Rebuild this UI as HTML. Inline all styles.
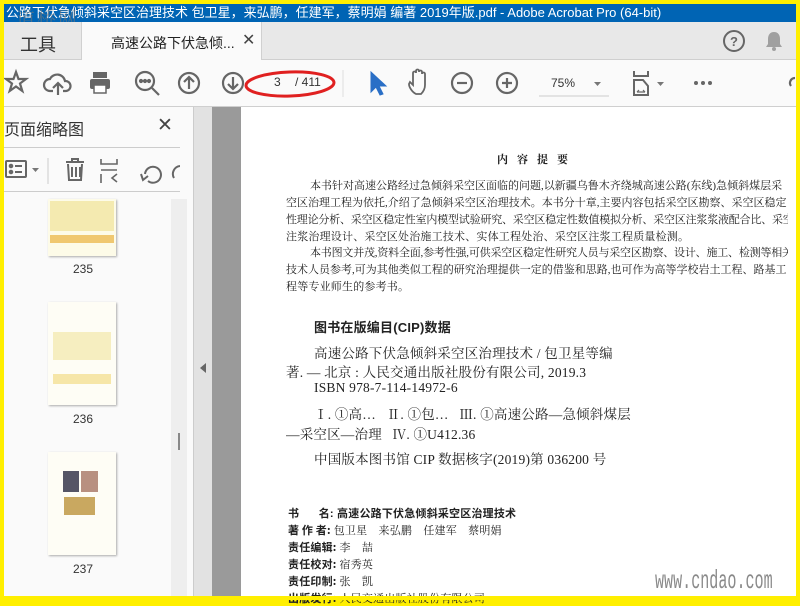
<!DOCTYPE html>
<html><head><meta charset="utf-8"><style>
*{margin:0;padding:0;box-sizing:border-box}
body{width:800px;height:600px;overflow:hidden;background:#ffef00;position:relative;font-family:"Liberation Sans","Noto Sans CJK SC",sans-serif}
.abs{position:absolute}
.serif{font-family:"Liberation Serif","Noto Serif CJK SC",serif;color:#222}
.t{position:absolute;white-space:nowrap;font-size:11px;letter-spacing:0.2px;overflow:hidden}
.w{width:502px}
</style></head><body>
<div class="abs" style="left:4px;top:4px;width:792px;height:18px;background:#0064b4;color:#fff;font-size:13px;line-height:17px;white-space:nowrap;overflow:hidden;padding-left:2px">公路下伏急倾斜采空区治理技术 包卫星，来弘鹏，任建军，蔡明娟 编著 2019年版.pdf - Adobe Acrobat Pro (64-bit)</div>
<div class="abs" style="left:16px;top:4px;font-size:19px;color:#777;opacity:.6;font-family:'Noto Serif CJK SC',serif;letter-spacing:2px">道桥网</div>
<div class="abs" style="left:4px;top:22px;width:792px;height:38px;background:#e8e8e8;border-bottom:1px solid #cfcfcf"></div>
<div class="abs" style="left:4px;top:22px;width:78px;height:37px;border-right:1px solid #d0d0d0"></div>
<div class="abs" style="left:20px;top:31px;font-size:18px;color:#333">工具</div>
<div class="abs" style="left:82px;top:22px;width:180px;height:38px;background:#fafafa;border-right:1px solid #d0d0d0"></div>
<div class="abs" style="left:111px;top:33px;font-size:14px;color:#222">高速公路下伏急倾...</div>
<div class="abs" style="left:242px;top:30px;font-size:16px;color:#444">✕</div>
<svg class="abs" style="left:722px;top:29px" width="24" height="24"><circle cx="12" cy="12" r="10" fill="none" stroke="#666" stroke-width="2"/><text x="12" y="17" font-size="13" font-weight="bold" text-anchor="middle" fill="#666" font-family="Liberation Sans">?</text></svg>
<svg class="abs" style="left:764px;top:30px" width="20" height="22"><path d="M10 2c-4 0-6 3-6 7v5l-2 3h16l-2-3V9c0-4-2-7-6-7z" fill="#a0a0a0"/><circle cx="10" cy="19" r="2" fill="#a0a0a0"/></svg>
<div class="abs" style="left:4px;top:60px;width:792px;height:47px;background:#fafafa;border-bottom:1px solid #cfcfcf"></div>
<svg class="abs" style="left:4px;top:60px" width="792" height="46" fill="none" stroke="#666" stroke-width="2.2">
<path d="M12 12l2.5 7h7.5l-6 4.5 2.3 7.5-6.3-4.5-6.3 4.5 2.3-7.5-6-4.5h7.5z"/>
<path d="M49 31h-3a6 6 0 0 1 0-12 8 8 0 0 1 15 2 5 5 0 0 1 1 10h-3M54 35V23M49 28l5-5 5 5"/>
<rect x="89" y="12" width="14" height="6" fill="#666" stroke="none"/><rect x="86" y="19" width="20" height="10" rx="2" fill="#666" stroke="none"/><rect x="90" y="25" width="12" height="8" fill="#fff" stroke="#666" stroke-width="1.5"/>
<circle cx="141" cy="21" r="9"/><path d="M148 28l7 7"/><circle cx="137" cy="21" r="1" fill="#666"/><circle cx="141" cy="21" r="1" fill="#666"/><circle cx="145" cy="21" r="1" fill="#666"/>
<circle cx="185" cy="23" r="10"/><path d="M185 29V17M180 22l5-5 5 5"/>
<circle cx="229" cy="23" r="10"/><path d="M229 17v12M224 24l5 5 5-5"/>
<path d="M339 10v27" stroke="#ddd" stroke-width="1"/>
<path d="M367 12v20l5-5 4 8 3-1-4-8h7z" fill="#2a6fc6" stroke="#2a6fc6" stroke-width="1"/>
<path d="M412 34c-4-2-7-7-7-10l1-2 3 3V13a1.5 1.5 0 0 1 3 0v-2a1.5 1.5 0 0 1 3 0v1a1.5 1.5 0 0 1 3 0v2a1.5 1.5 0 0 1 3 0v11c0 4-2 7-4 9z" stroke-width="1.8"/>
<circle cx="458" cy="23" r="10"/><path d="M453 23h10"/>
<circle cx="503" cy="23" r="10"/><path d="M498 23h10M503 18v10"/>
<path d="M535 36h70" stroke="#ccc" stroke-width="1"/>
<path d="M590 22h7l-3.5 4z" fill="#777" stroke="none"/>
<path d="M630 11v5h14v-5M630 20v15h14v-9l-5-6z" stroke-width="2"/><path d="M633 32h8M633 32l2-2M641 32l-2-2" stroke-width="1.2"/>
<path d="M653 22h7l-3.5 4z" fill="#777" stroke="none"/>
<circle cx="692" cy="23" r="2" fill="#666" stroke="none"/><circle cx="699" cy="23" r="2" fill="#666" stroke="none"/><circle cx="706" cy="23" r="2" fill="#666" stroke="none"/>
<path d="M791 18a5 5 0 0 0-4 8"/>
</svg>
<div class="abs" style="left:274px;top:75px;font-size:12px;color:#333">3</div>
<div class="abs" style="left:295px;top:75px;font-size:12px;color:#333">/ 411</div>
<div class="abs" style="left:551px;top:76px;font-size:12px;color:#333">75%</div>
<svg class="abs" style="left:242px;top:64px" width="100" height="40"><ellipse cx="48" cy="20" rx="44" ry="12" fill="none" stroke="#e02020" stroke-width="3" transform="rotate(-2 48 20)"/></svg>
<div class="abs" style="left:4px;top:107px;width:189px;height:489px;background:#fafafa"></div>
<div class="abs" style="left:4px;top:116px;font-size:16px;color:#333">页面缩略图</div>
<div class="abs" style="left:157px;top:114px;font-size:19px;color:#444">✕</div>
<div class="abs" style="left:4px;top:147px;width:176px;height:1px;background:#ccc"></div>
<svg class="abs" style="left:4px;top:152px" width="176" height="38" fill="none" stroke="#666" stroke-width="2">
<rect x="2" y="9" width="20" height="16" rx="1"/><circle cx="7" cy="14" r="1.3" fill="#666"/><circle cx="7" cy="20" r="1.3" fill="#666"/><path d="M11 14h7M11 20h7"/>
<path d="M28 16h7l-3.5 4z" fill="#777" stroke="none"/>
<path d="M44 6v26" stroke="#ccc" stroke-width="1"/>
<path d="M62 10h18M68 10V7h6v3M64 12l1 16h12l1-16M68 15v10M72 15v10M76 15v10" />
<path d="M97 7v5h16V7M97 18h16M97 22v9M113 22l-5 4 5 4" stroke-width="1.6"/>
<path d="M141 22a8 8 0 1 1 3 7M137 22l2 6 5-4" />
<path d="M176 14a8 8 0 0 0-6 12" />
</svg>
<div class="abs" style="left:4px;top:191px;width:176px;height:1px;background:#ccc"></div>
<div class="abs" style="left:171px;top:199px;width:16px;height:397px;background:#eee"></div>
<div class="abs" style="left:178px;top:433px;width:2px;height:17px;background:#888"></div>
<div class="abs" style="left:48px;top:199px;width:68px;height:57px;background:#fdfbe8;box-shadow:1px 1px 2px #aaa"><div style="margin:2px;height:30px;background:#f4eab0"></div><div style="margin:4px 2px;height:8px;background:#f0c870"></div></div>
<div class="abs" style="left:73px;top:262px;font-size:12px;color:#333">235</div>
<div class="abs" style="left:48px;top:302px;width:68px;height:103px;background:#fefdf5;box-shadow:1px 1px 2px #aaa"><div style="margin:30px 5px 0;height:28px;background:#f6eec0"></div><div style="margin:14px 5px;height:10px;background:#f6e6a8"></div></div>
<div class="abs" style="left:73px;top:412px;font-size:12px;color:#333">236</div>
<div class="abs" style="left:48px;top:452px;width:68px;height:103px;background:#fefdf5;box-shadow:1px 1px 2px #aaa"><div style="position:absolute;left:15px;top:19px;width:16px;height:21px;background:#556"></div><div style="position:absolute;left:33px;top:19px;width:17px;height:21px;background:#b89080"></div><div style="position:absolute;left:16px;top:45px;width:31px;height:18px;background:#c9a860"></div></div>
<div class="abs" style="left:73px;top:562px;font-size:12px;color:#333">237</div>
<div class="abs" style="left:193px;top:107px;width:19px;height:489px;background:#e2e2e2;border-left:1px solid #ccc"></div>
<div class="abs" style="left:200px;top:363px;width:0;height:0;border-top:5px solid transparent;border-bottom:5px solid transparent;border-right:6px solid #666"></div>
<div class="abs" style="left:212px;top:107px;width:29px;height:489px;background:#9a9a9a"></div>
<div class="abs" style="left:241px;top:107px;width:555px;height:489px;background:#fff"></div>
<div class="serif">
<div class="t" style="left:497px;top:151px;font-weight:bold;letter-spacing:9px">内容提要</div>
<div class="t" style="left:310px;top:177px;width:478px;letter-spacing:0">本书针对高速公路经过急倾斜采空区面临的问题,以新疆乌鲁木齐绕城高速公路(东线)急倾斜煤层采</div>
<div class="t w" style="left:286px;top:194px;letter-spacing:0">空区治理工程为依托,介绍了急倾斜采空区治理技术。本书分十章,主要内容包括采空区勘察、采空区稳定</div>
<div class="t w" style="left:286px;top:211px;letter-spacing:-0.2px">性理论分析、采空区稳定性室内模型试验研究、采空区稳定性数值模拟分析、采空区注浆浆液配合比、采空区</div>
<div class="t w" style="left:286px;top:228px">注浆治理设计、采空区处治施工技术、实体工程处治、采空区注浆工程质量检测。</div>
<div class="t" style="left:310px;top:244px;width:478px;letter-spacing:-0.2px">本书图文并茂,资料全面,参考性强,可供采空区稳定性研究人员与采空区勘察、设计、施工、检测等相关</div>
<div class="t w" style="left:286px;top:261px;letter-spacing:0">技术人员参考,可为其他类似工程的研究治理提供一定的借鉴和思路,也可作为高等学校岩土工程、路基工</div>
<div class="t w" style="left:286px;top:278px">程等专业师生的参考书。</div>
<div class="t" style="left:314px;top:317px;font-size:13px;font-weight:bold;font-family:'Liberation Sans','Noto Sans CJK SC',sans-serif">图书在版编目(CIP)数据</div>
<div class="t" style="left:314px;top:342px;font-size:13.5px">高速公路下伏急倾斜采空区治理技术 / 包卫星等编</div>
<div class="t" style="left:286px;top:361px;font-size:13.5px">著. — 北京 : 人民交通出版社股份有限公司, 2019.3</div>
<div class="t" style="left:314px;top:380px;font-size:13.5px">ISBN 978-7-114-14972-6</div>
<div class="t" style="left:314px;top:403px;font-size:13.5px">Ⅰ. ①高…&nbsp;&nbsp;&nbsp;Ⅱ. ①包…&nbsp;&nbsp;&nbsp;Ⅲ. ①高速公路—急倾斜煤层</div>
<div class="t" style="left:286px;top:423px;font-size:13.5px">—采空区—治理&nbsp;&nbsp;&nbsp;Ⅳ. ①U412.36</div>
<div class="t" style="left:314px;top:448px;font-size:13.5px">中国版本图书馆 CIP 数据核字(2019)第 036200 号</div>
<div class="t" style="left:288px;top:505px;font-size:11px;font-family:'Liberation Sans','Noto Sans CJK SC',sans-serif"><b>书&nbsp;&nbsp;&nbsp;&nbsp;&nbsp;&nbsp;名: 高速公路下伏急倾斜采空区治理技术</b></div>
<div class="t" style="left:288px;top:522px;font-size:11px"><b style="font-family:'Noto Sans CJK SC',sans-serif">著 作 者:</b> 包卫星　来弘鹏　任建军　蔡明娟</div>
<div class="t" style="left:288px;top:539px;font-size:11px"><b style="font-family:'Noto Sans CJK SC',sans-serif">责任编辑:</b> 李　喆</div>
<div class="t" style="left:288px;top:556px;font-size:11px"><b style="font-family:'Noto Sans CJK SC',sans-serif">责任校对:</b> 宿秀英</div>
<div class="t" style="left:288px;top:573px;font-size:11px"><b style="font-family:'Noto Sans CJK SC',sans-serif">责任印制:</b> 张　凯</div>
<div class="t" style="left:288px;top:590px;font-size:11px"><b style="font-family:'Noto Sans CJK SC',sans-serif">出版发行:</b> 人民交通出版社股份有限公司</div>
</div>
<div class="abs" style="left:655px;top:566px;font-size:26px;color:#8a8a8a;font-family:'Liberation Mono',monospace;transform:scaleX(0.58);transform-origin:left;white-space:nowrap">www.cndao.com</div>
<div class="abs" style="left:0;top:596px;width:800px;height:4px;background:#ffef00"></div>
</body></html>
